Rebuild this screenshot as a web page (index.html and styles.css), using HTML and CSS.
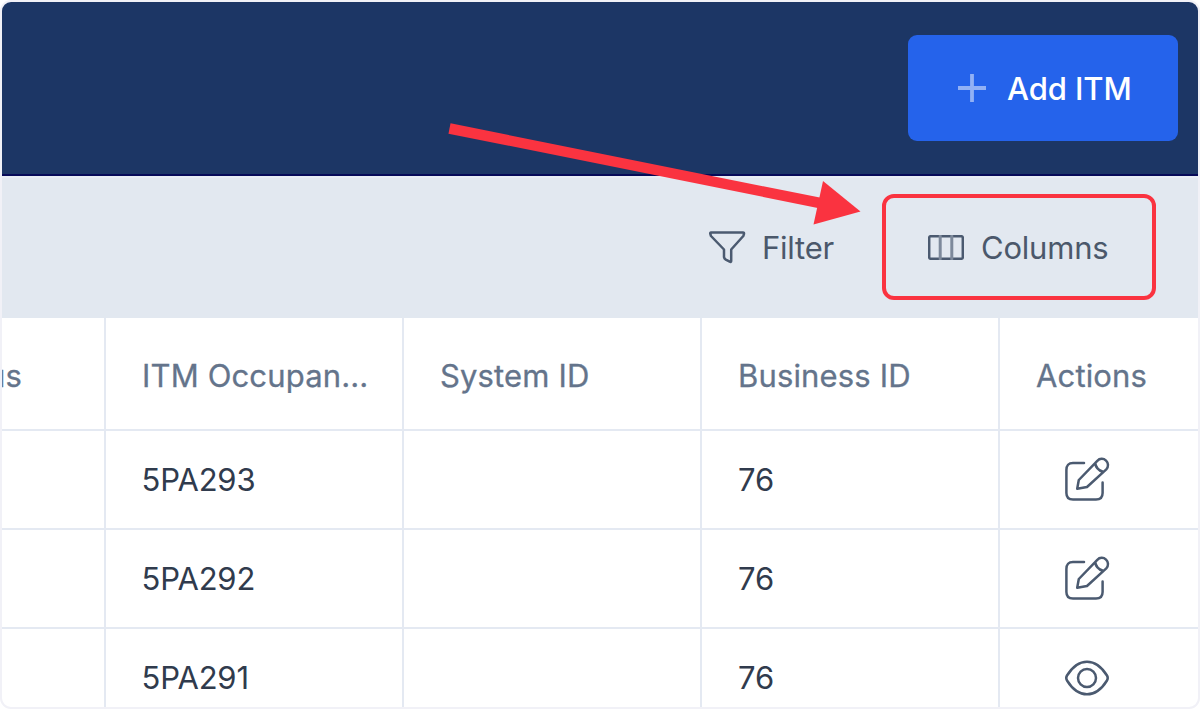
FILE: index.html
```html
<!DOCTYPE html>
<html lang="en">
<head>
<meta charset="utf-8">
<title>ITM list</title>
<link rel="stylesheet" href="styles.css">
</head>
<body>
<div class="frame">
  <header class="topbar">
    <button class="add"><svg class="plus" width="30" height="30" viewBox="0 0 30 30"><path d="M15 1v28M1 15h28"/></svg><span class="add-label">Add ITM</span></button>
  </header>
  <div class="toolbar">
    <button class="tool filter"><svg class="icon" width="38" height="34" viewBox="0 0 38 34"><path d="M3 2.4H35Q36.2 2.4 36 3.9L35.3 6L23.2 19.5V31Q23.2 32.4 21.7 31.7L17.8 29.6Q16.2 28.6 16 27V19.5L3 6L2.3 3.9Q2.1 2.4 3 2.4Z"/></svg><span class="filter-label">Filter</span></button>
    <button class="tool columns"><svg class="icon" width="36" height="25" viewBox="0 0 36 25"><rect x="1.2" y="1.2" width="33.6" height="22.6" rx="1.5"/><path class="divider" d="M12.2 1v23M23.8 1v23"/></svg><span class="columns-label">Columns</span></button>
  </div>
  <div class="row head">
    <div class="cell clipped"><span class="status-label">Status</span></div><div class="cell occupancy">ITM Occupan...</div><div class="cell system">System ID</div><div class="cell business">Business ID</div><div class="cell actions">Actions</div>
  </div>
  <div class="row">
    <div class="cell"></div><div class="cell code">5PA293</div><div class="cell"></div><div class="cell">76</div>
    <div class="cell action"><svg class="icon" width="46" height="46" viewBox="0 0 46 46"><path d="M20 6H9Q2.4 6 2.4 13V36Q2.4 42.6 9 42.6H32Q38.6 42.6 38.6 36V25.5"/><path d="M13.2 31.8L14.8 23L33.3 3.8A5.9 5.9 0 0 1 42.3 12.3L23 30ZM31.2 6Q32 12.6 39 14.8"/></svg></div>
  </div>
  <div class="row">
    <div class="cell"></div><div class="cell code">5PA292</div><div class="cell"></div><div class="cell">76</div>
    <div class="cell action"><svg class="icon" width="46" height="46" viewBox="0 0 46 46"><path d="M20 6H9Q2.4 6 2.4 13V36Q2.4 42.6 9 42.6H32Q38.6 42.6 38.6 36V25.5"/><path d="M13.2 31.8L14.8 23L33.3 3.8A5.9 5.9 0 0 1 42.3 12.3L23 30ZM31.2 6Q32 12.6 39 14.8"/></svg></div>
  </div>
  <div class="row">
    <div class="cell"></div><div class="cell code">5PA291</div><div class="cell"></div><div class="cell">76</div>
    <div class="cell action view"><svg class="icon" width="46" height="46" viewBox="0 0 46 46"><path d="M3 20.5C8 12.5 14.5 6.7 23 6.7S38 12.5 43 20.5Q44.5 23 43 25.5C38 33.5 31.5 39.3 23 39.3S8 33.5 3 25.5Q1.5 23 3 20.5Z"/><circle cx="23" cy="23" r="9"/></svg></div>
  </div>
  <svg class="arrow" width="420" height="110" viewBox="0 0 420 110"><path class="shaft" d="M11.5 10.5L382 85"/><path class="tip" d="M385 63L422.5 93.5L375.5 106.5Z"/></svg>
</div>
</body>
</html>
```
FILE: styles.css
```css
* { box-sizing: border-box; }
body { margin: 0; background: #fff; font-family: Inter, sans-serif; }
.frame {
  position: relative;
  width: 1200px;
  height: 709px;
  overflow: hidden;
  border: 2px solid #f1f1f7;
  border-radius: 11px;
  background: #fff;
}
.topbar {
  display: flex;
  justify-content: flex-end;
  height: 174px;
  padding: 33px 20px 0 0;
  background: #1c3665;
  border-bottom: 2px solid #060a58;
}
button { border: 0; background: none; font: inherit; }
.add {
  display: flex;
  align-items: center;
  gap: 20px;
  width: 270px;
  height: 106px;
  padding: 0 0 0 49px;
  border-radius: 9px;
  background: #2563eb;
  color: #fff;
  font-size: 31px;
  font-weight: 500;
}
.add-label { letter-spacing: -0.1px; }
.plus { fill: none; stroke: #92b1f5; stroke-width: 3.8; }
.toolbar {
  display: flex;
  justify-content: flex-end;
  align-items: flex-start;
  gap: 48px;
  height: 141.5px;
  padding: 18px 42px 0 0;
  background: #e2e8f0;
  box-shadow: inset 0 2px 0 #e8edf4;
}
.tool {
  display: flex;
  align-items: center;
  height: 106px;
  padding: 0;
  color: #4b586b;
  font-size: 31px;
  letter-spacing: -0.22px;
}
.filter { gap: 16px; }
.columns {
  width: 274px;
  gap: 17px;
  padding-left: 42px;
  border: 4px solid #fa3340;
  border-radius: 12px;
}
.columns .icon { margin-top: 1px; }
.icon { flex: none; fill: none; stroke: #4b5a70; stroke-width: 2.5; stroke-linejoin: round; stroke-linecap: round; }
.divider { stroke: #7d899b; stroke-width: 3; }
.row {
  display: grid;
  grid-template-columns: 104px 298px 298px 298px 198px;
  height: 99.4px;
  border-bottom: 2.5px solid #e4e9f2;
}
.head { height: 113px; }
.cell {
  display: flex;
  align-items: center;
  min-width: 0;
  padding-left: 36px;
  border-right: 2px solid #e4e9f2;
  color: #303b4d;
  font-size: 31px;
  white-space: nowrap;
}
.code { padding-left: 35.5px; letter-spacing: -0.2px; }
.cell:last-child { border-right: 0; }
.head .cell { color: #64748b; padding-top: 4px; letter-spacing: 0.15px; -webkit-text-stroke: 0.3px #64748b; }
.head .clipped { justify-content: flex-end; padding-left: 0; padding-right: 82px; overflow: hidden; }
.cell.action { padding-left: 64px; padding-top: 1px; }
.cell.view { padding-top: 0; }
.arrow { position: absolute; left: 436px; top: 116px; overflow: visible; }
.shaft { stroke: #fa3340; stroke-width: 10.5; }
.tip { fill: #fa3340; }
```
